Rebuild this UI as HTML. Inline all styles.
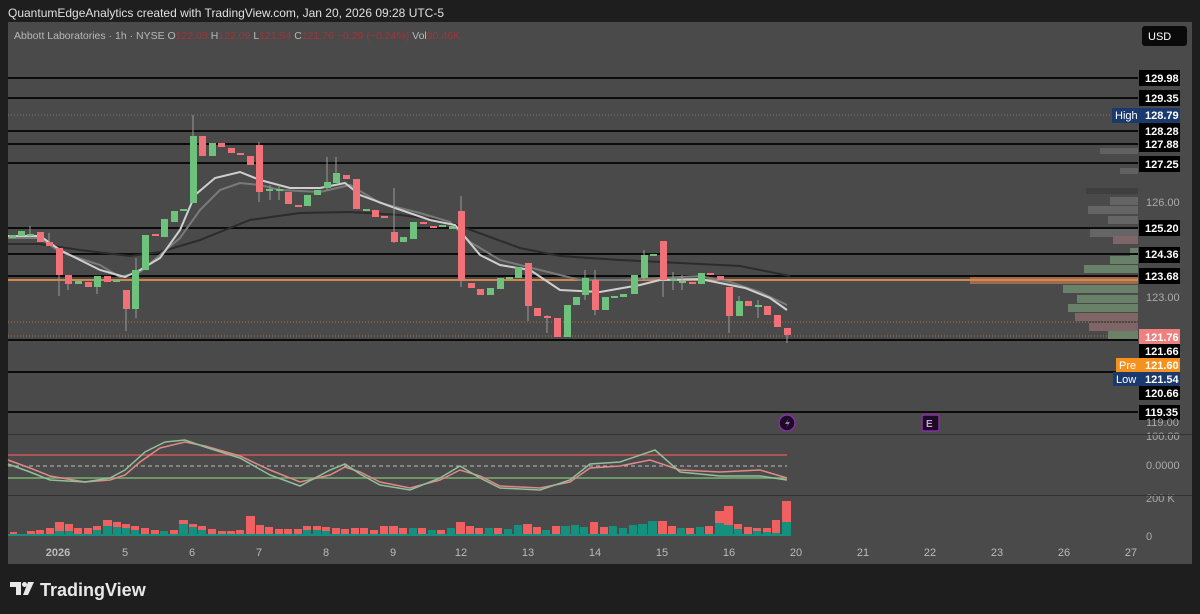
<!DOCTYPE html>
<html><head><meta charset="utf-8"><style>
body{margin:0;width:1200px;height:614px;background:#1e1e1e;overflow:hidden;font-family:"Liberation Sans",sans-serif}
svg{position:absolute;left:0;top:0}
</style></head><body>
<svg width="1200" height="614" viewBox="0 0 1200 614" font-family="Liberation Sans, sans-serif">
<rect x="8" y="22" width="1184" height="542" fill="#4a4a4a"/>
<text x="8" y="17" fill="#e0e0e0" font-size="12">QuantumEdgeAnalytics created with TradingView.com, Jan 20, 2026 09:28 UTC-5</text>
<text x="14" y="39" fill="#b8b8b8" font-size="10.5">Abbott Laboratories · 1h · NYSE  O<tspan fill="#a0343c">122.03</tspan>  H<tspan fill="#a0343c">122.09</tspan>  L<tspan fill="#a0343c">121.54</tspan>  C<tspan fill="#a0343c">121.76  −0.29 (−0.24%)</tspan>  Vol<tspan fill="#a0343c">90.46K</tspan></text>
<rect x="1142" y="26" width="45" height="20" rx="3" fill="#0a0a0a"/>
<text x="1148" y="40" fill="#fff" font-size="11">USD</text>
<!-- volume profile -->
<g opacity="0.85">
<rect x="1100" y="148" width="38" height="6" fill="#666"/><rect x="1120" y="168" width="18" height="6" fill="#666"/>
<rect x="1086" y="188" width="52" height="6" fill="#3e3e3e"/><rect x="1110" y="197" width="28" height="8" fill="#6a6a6a"/>
<rect x="1088" y="206" width="50" height="8" fill="#6a6a6a"/><rect x="1108" y="216" width="30" height="8" fill="#6a6a6a"/>
<rect x="1090" y="229" width="48" height="8" fill="#6a6a6a"/><rect x="1113" y="236" width="25" height="8" fill="#8a6a6c"/>
<rect x="1130" y="248" width="8" height="8" fill="#6f8a6f"/><rect x="1110" y="256" width="28" height="8" fill="#6f8a6f"/>
<rect x="1084" y="265" width="54" height="8" fill="#6f8a6f"/><rect x="970" y="276" width="168" height="8" fill="#b07050"/>
<rect x="1063" y="285" width="75" height="8" fill="#6f8a6f"/><rect x="1077" y="295" width="61" height="8" fill="#6f8a6f"/>
<rect x="1068" y="304" width="70" height="8" fill="#6f8a6f"/><rect x="1075" y="313" width="63" height="8" fill="#8a6a6c"/>
<rect x="1089" y="323" width="49" height="8" fill="#8a6a6c"/><rect x="1108" y="331" width="30" height="8" fill="#6f8a6f"/>
</g>
<!-- horizontal lines -->
<g stroke="#0c0c0c" stroke-width="2">
<line x1="8" x2="1138" y1="78" y2="78"/><line x1="8" x2="1138" y1="98" y2="98"/>
<line x1="8" x2="1138" y1="131" y2="131"/><line x1="8" x2="1138" y1="144" y2="144"/>
<line x1="8" x2="1138" y1="163" y2="163"/><line x1="8" x2="1138" y1="228" y2="228"/>
<line x1="8" x2="1138" y1="254" y2="254"/><line x1="8" x2="1138" y1="276" y2="276"/>
<line x1="8" x2="1138" y1="340" y2="340"/><line x1="8" x2="1138" y1="372" y2="372"/>
<line x1="8" x2="1138" y1="412" y2="412"/>
</g>
<line x1="8" x2="1138" y1="280" y2="280" stroke="#d2874f" stroke-width="2"/>
<line x1="8" x2="1138" y1="115" y2="115" stroke="#777" stroke-dasharray="1 2"/>
<line x1="8" x2="1138" y1="322" y2="322" stroke="#b07040" stroke-dasharray="1 2"/>
<line x1="8" x2="1138" y1="336" y2="336" stroke="#b07040" stroke-dasharray="1 2"/>
<!-- MAs -->
<polyline fill="none" stroke="#2c2c2c" stroke-width="2" points="8,244 40,244 80,250 130,256 160,252 200,240 250,220 300,213 350,212 400,215 440,220 460,226 520,248 560,256 620,260 680,263 740,266 790,276"/>
<polyline fill="none" stroke="#7a7a7a" stroke-width="2" points="8,238 40,238 60,252 100,265 120,277 140,272 160,255 180,238 200,210 220,190 240,183 260,185 280,190 320,192 350,185 380,203 420,213 450,222 470,242 500,260 540,270 580,280 620,280 660,278 700,276 730,282 760,292 787,305"/>
<polyline fill="none" stroke="#cfcfcf" stroke-width="2" points="8,236 40,236 60,250 100,270 125,277 140,270 160,258 180,230 195,195 215,178 240,172 260,180 290,188 320,188 345,183 360,195 395,208 430,220 455,225 480,255 500,265 530,270 560,290 600,292 640,285 660,280 700,279 720,283 745,288 770,298 787,310"/>
<!-- candles -->
<g stroke="#9a9a9a" stroke-width="1">
<line x1="59" x2="59" y1="248" y2="296"/><line x1="126" x2="126" y1="290" y2="331"/><line x1="136" x2="136" y1="258" y2="318"/>
<line x1="193" x2="193" y1="115" y2="203"/><line x1="259" x2="259" y1="142" y2="202"/><line x1="394" x2="394" y1="188" y2="243"/>
<line x1="461" x2="461" y1="196" y2="287"/><line x1="528" x2="528" y1="263" y2="321"/><line x1="547" x2="547" y1="315" y2="333"/>
<line x1="663" x2="663" y1="241" y2="297"/><line x1="729" x2="729" y1="287" y2="333"/><line x1="787" x2="787" y1="328" y2="343"/>
<line x1="30" x2="30" y1="226" y2="238"/><line x1="49" x2="49" y1="233" y2="246"/><line x1="68" x2="68" y1="275" y2="290"/>
<line x1="97" x2="97" y1="276" y2="294"/><line x1="327" x2="327" y1="157" y2="190"/><line x1="336" x2="336" y1="157" y2="183"/>
<line x1="270" x2="270" y1="185" y2="200"/><line x1="279" x2="279" y1="185" y2="200"/><line x1="585" x2="585" y1="270" y2="300"/>
<line x1="595" x2="595" y1="270" y2="315"/><line x1="644" x2="644" y1="250" y2="280"/><line x1="673" x2="673" y1="272" y2="290"/>
<line x1="682" x2="682" y1="275" y2="290"/><line x1="739" x2="739" y1="296" y2="316"/><line x1="758" x2="758" y1="300" y2="318"/>
</g>
<g fill="#6fc27c">
<rect x="9" y="235" width="7" height="3"/><rect x="18" y="231" width="7" height="5"/><rect x="27" y="234" width="7" height="2"/>
<rect x="75" y="281" width="7" height="3"/><rect x="94" y="276" width="7" height="11"/><rect x="113" y="280" width="7" height="2"/>
<rect x="132" y="270" width="7" height="39"/><rect x="142" y="235" width="7" height="35"/><rect x="161" y="219" width="7" height="18"/>
<rect x="171" y="211" width="7" height="11"/><rect x="180" y="209" width="7" height="2"/><rect x="190" y="136" width="7" height="67"/>
<rect x="209" y="143" width="7" height="13"/><rect x="266" y="189" width="7" height="2"/><rect x="276" y="189" width="7" height="2"/>
<rect x="304" y="195" width="7" height="11"/><rect x="314" y="190" width="7" height="5"/><rect x="324" y="182" width="7" height="6"/>
<rect x="333" y="173" width="7" height="10"/><rect x="363" y="209" width="7" height="2"/><rect x="400" y="237" width="7" height="5"/>
<rect x="410" y="222" width="7" height="17"/><rect x="439" y="225" width="7" height="2"/><rect x="449" y="226" width="7" height="3"/>
<rect x="487" y="288" width="7" height="7"/><rect x="497" y="278" width="7" height="11"/><rect x="506" y="277" width="7" height="2"/>
<rect x="515" y="267" width="7" height="11"/><rect x="564" y="305" width="7" height="32"/><rect x="573" y="297" width="7" height="8"/>
<rect x="582" y="278" width="7" height="17"/><rect x="602" y="297" width="7" height="13"/><rect x="611" y="296" width="7" height="2"/>
<rect x="620" y="294" width="7" height="3"/><rect x="631" y="275" width="7" height="19"/><rect x="641" y="255" width="7" height="23"/>
<rect x="650" y="254" width="7" height="2"/><rect x="670" y="279" width="7" height="2"/><rect x="679" y="281" width="7" height="2"/>
<rect x="698" y="273" width="7" height="11"/><rect x="736" y="301" width="7" height="15"/><rect x="755" y="305" width="7" height="2"/>
</g>
<g fill="#f07178">
<rect x="37" y="232" width="7" height="10"/><rect x="46" y="242" width="7" height="4"/><rect x="56" y="248" width="7" height="27"/>
<rect x="65" y="275" width="7" height="9"/><rect x="85" y="282" width="7" height="5"/><rect x="104" y="276" width="7" height="6"/>
<rect x="123" y="290" width="7" height="19"/><rect x="152" y="234" width="7" height="2"/><rect x="199" y="136" width="7" height="20"/>
<rect x="218" y="143" width="7" height="4"/><rect x="228" y="148" width="7" height="5"/><rect x="237" y="153" width="7" height="2"/>
<rect x="247" y="156" width="7" height="9"/><rect x="256" y="145" width="7" height="47"/><rect x="285" y="192" width="7" height="12"/>
<rect x="295" y="205" width="7" height="2"/><rect x="343" y="175" width="7" height="4"/><rect x="353" y="179" width="7" height="30"/>
<rect x="372" y="210" width="7" height="7"/><rect x="381" y="216" width="7" height="2"/><rect x="391" y="232" width="7" height="10"/>
<rect x="420" y="222" width="7" height="2"/><rect x="430" y="226" width="7" height="2"/><rect x="458" y="211" width="7" height="69"/>
<rect x="468" y="283" width="7" height="5"/><rect x="477" y="289" width="7" height="6"/><rect x="525" y="263" width="7" height="43"/>
<rect x="534" y="308" width="7" height="8"/><rect x="544" y="316" width="7" height="2"/><rect x="554" y="318" width="7" height="19"/>
<rect x="592" y="280" width="7" height="30"/><rect x="660" y="241" width="7" height="39"/><rect x="689" y="282" width="7" height="2"/>
<rect x="707" y="273" width="7" height="2"/><rect x="717" y="276" width="7" height="4"/><rect x="726" y="287" width="7" height="29"/>
<rect x="745" y="301" width="7" height="5"/><rect x="764" y="306" width="7" height="9"/><rect x="774" y="315" width="7" height="12"/>
<rect x="784" y="328" width="7" height="7"/>
</g>
<!-- price labels -->
<g font-size="11" font-weight="bold" fill="#fff">
<rect x="1139" y="70" width="41" height="16" fill="#000"/><text x="1145" y="82">129.98</text>
<rect x="1139" y="90" width="41" height="16" fill="#000"/><text x="1145" y="102">129.35</text>
<rect x="1112" y="108" width="27" height="15" fill="#1a3a6e"/><text x="1115" y="119" font-weight="normal">High</text>
<rect x="1139" y="108" width="41" height="15" fill="#1a3a6e"/><text x="1145" y="119">128.79</text>
<rect x="1139" y="123" width="41" height="16" fill="#000"/><text x="1145" y="135">128.28</text>
<rect x="1139" y="136" width="41" height="16" fill="#000"/><text x="1145" y="148">127.88</text>
<rect x="1139" y="156" width="41" height="16" fill="#000"/><text x="1145" y="168">127.25</text>
<rect x="1139" y="220" width="41" height="16" fill="#000"/><text x="1145" y="232">125.20</text>
<rect x="1139" y="247" width="41" height="16" fill="#000"/><text x="1145" y="258">124.36</text>
<rect x="1139" y="268" width="41" height="16" fill="#000"/><text x="1145" y="280">123.68</text>
<rect x="1139" y="329" width="41" height="15" fill="#f08080"/><text x="1145" y="341">121.76</text>
<rect x="1139" y="344" width="41" height="14" fill="#000"/><text x="1145" y="355">121.66</text>
<rect x="1116" y="358" width="23" height="14" fill="#f5921e"/><text x="1119" y="369" font-weight="normal">Pre</text>
<rect x="1139" y="358" width="41" height="14" fill="#f5921e"/><text x="1145" y="369">121.60</text>
<rect x="1113" y="372" width="26" height="14" fill="#1a3a6e"/><text x="1116" y="383" font-weight="normal">Low</text>
<rect x="1139" y="372" width="41" height="14" fill="#1a3a6e"/><text x="1145" y="383">121.54</text>
<rect x="1139" y="386" width="41" height="14" fill="#000"/><text x="1145" y="397">120.66</text>
<rect x="1139" y="405" width="41" height="15" fill="#000"/><text x="1145" y="416">119.35</text>
</g>
<g font-size="11" fill="#aaa">
<text x="1146" y="206">126.00</text><text x="1146" y="301">123.00</text>
<text x="1146" y="426">119.00</text><text x="1146" y="469">0.0000</text>
<text x="1146" y="440">100.00</text><text x="1146" y="502">200 K</text><text x="1146" y="540">0</text>
</g>
<!-- event icons -->
<circle cx="787" cy="423" r="8" fill="#1a0a22" stroke="#8a2ca8" stroke-width="1.5"/>
<path d="M789 418l-4 6h3l-2 4 4-6h-3z" fill="#b46ad0"/>
<rect x="922" y="415" width="17" height="16" rx="2" fill="#1a0a22" stroke="#8a2ca8" stroke-width="1.5"/>
<text x="926" y="427" fill="#d0a0e0" font-size="10" font-weight="bold">E</text>
<!-- pane separators -->
<line x1="8" x2="1192" y1="434.5" y2="434.5" stroke="#333"/>
<line x1="8" x2="1192" y1="495.5" y2="495.5" stroke="#333"/>
<!-- oscillator -->
<line x1="8" x2="787" y1="455" y2="455" stroke="#d05858" stroke-width="1.5"/>
<line x1="8" x2="787" y1="466" y2="466" stroke="#bbb" stroke-dasharray="4 3"/>
<line x1="8" x2="787" y1="478" y2="478" stroke="#7ab070" stroke-width="1.5"/>
<polyline fill="none" stroke="#e08888" stroke-width="1.5" points="8,460 30,468 50,476 85,482 110,480 125,475 140,462 160,448 185,442 205,446 240,456 270,470 300,482 330,475 345,467 360,472 380,482 410,488 440,480 460,470 480,476 500,486 540,488 570,482 590,468 620,466 650,460 680,470 720,472 760,470 787,478"/>
<polyline fill="none" stroke="#8fc09a" stroke-width="1.5" points="8,464 30,472 50,480 85,482 110,478 125,470 145,452 165,442 185,440 205,447 240,458 270,475 300,486 330,470 345,464 360,474 380,485 410,490 440,478 460,466 480,478 500,488 540,490 570,480 590,464 620,462 655,450 680,472 720,476 760,476 787,480"/>
<!-- volume -->
<g fill="#f06060">
<rect x="10" y="532" width="7" height="4"/><rect x="27" y="531" width="8" height="5"/><rect x="36" y="530" width="8" height="6"/><rect x="46" y="528" width="8" height="8"/><rect x="55" y="522" width="9" height="14"/><rect x="65" y="524" width="8" height="12"/><rect x="74" y="528" width="8" height="8"/><rect x="84" y="528" width="8" height="8"/><rect x="93" y="526" width="8" height="10"/><rect x="103" y="520" width="9" height="16"/><rect x="113" y="522" width="8" height="14"/><rect x="122" y="524" width="8" height="12"/><rect x="131" y="526" width="8" height="10"/><rect x="141" y="528" width="8" height="8"/><rect x="151" y="530" width="8" height="6"/><rect x="170" y="530" width="8" height="6"/><rect x="179" y="520" width="9" height="16"/><rect x="189" y="524" width="8" height="12"/><rect x="198" y="526" width="8" height="10"/><rect x="208" y="529" width="8" height="7"/><rect x="218" y="531" width="8" height="5"/><rect x="227" y="531" width="8" height="5"/><rect x="236" y="530" width="8" height="6"/><rect x="246" y="516" width="9" height="20"/><rect x="256" y="525" width="8" height="11"/><rect x="265" y="527" width="8" height="9"/><rect x="275" y="529" width="8" height="7"/><rect x="284" y="529" width="8" height="7"/><rect x="294" y="529" width="8" height="7"/><rect x="303" y="526" width="8" height="10"/><rect x="313" y="526" width="8" height="10"/><rect x="322" y="527" width="8" height="9"/><rect x="332" y="528" width="8" height="8"/><rect x="341" y="529" width="8" height="7"/><rect x="351" y="528" width="8" height="8"/><rect x="360" y="528" width="8" height="8"/><rect x="370" y="530" width="8" height="6"/><rect x="380" y="526" width="8" height="10"/><rect x="389" y="526" width="9" height="10"/><rect x="399" y="528" width="8" height="8"/><rect x="418" y="528" width="8" height="8"/><rect x="437" y="530" width="8" height="6"/><rect x="456" y="522" width="9" height="14"/><rect x="466" y="526" width="8" height="10"/><rect x="475" y="528" width="8" height="8"/><rect x="494" y="528" width="8" height="8"/><rect x="523" y="524" width="9" height="12"/><rect x="533" y="527" width="8" height="9"/><rect x="552" y="526" width="8" height="10"/><rect x="590" y="522" width="8" height="14"/><rect x="600" y="527" width="8" height="9"/><rect x="658" y="521" width="9" height="15"/><rect x="668" y="526" width="8" height="10"/><rect x="686" y="528" width="8" height="8"/><rect x="705" y="526" width="8" height="10"/><rect x="715" y="511" width="9" height="25"/><rect x="724" y="506" width="9" height="30"/><rect x="734" y="524" width="8" height="12"/><rect x="744" y="527" width="8" height="9"/><rect x="753" y="528" width="8" height="8"/><rect x="763" y="528" width="8" height="8"/><rect x="772" y="520" width="8" height="16"/><rect x="782" y="501" width="9" height="35"/>
</g>
<g fill="#15907e">
<rect x="8" y="534" width="780" height="2"/>
<rect x="55" y="531" width="9" height="5"/><rect x="65" y="531" width="8" height="5"/><rect x="93" y="530" width="8" height="6"/><rect x="103" y="526" width="9" height="10"/><rect x="113" y="527" width="8" height="9"/><rect x="122" y="528" width="8" height="8"/><rect x="131" y="530" width="8" height="6"/><rect x="160" y="531" width="8" height="5"/><rect x="179" y="524" width="9" height="12"/><rect x="189" y="527" width="8" height="9"/><rect x="198" y="530" width="8" height="6"/><rect x="303" y="530" width="8" height="6"/><rect x="313" y="530" width="8" height="6"/><rect x="322" y="531" width="8" height="5"/><rect x="409" y="528" width="8" height="8"/><rect x="428" y="530" width="8" height="6"/><rect x="447" y="528" width="8" height="8"/><rect x="485" y="528" width="8" height="8"/><rect x="504" y="529" width="8" height="7"/><rect x="514" y="525" width="8" height="11"/><rect x="542" y="530" width="8" height="6"/><rect x="561" y="526" width="9" height="10"/><rect x="571" y="525" width="8" height="11"/><rect x="580" y="527" width="8" height="9"/><rect x="609" y="526" width="8" height="10"/><rect x="619" y="528" width="8" height="8"/><rect x="629" y="525" width="8" height="11"/><rect x="638" y="524" width="9" height="12"/><rect x="648" y="521" width="9" height="15"/><rect x="677" y="528" width="8" height="8"/><rect x="696" y="527" width="8" height="9"/><rect x="715" y="523" width="9" height="13"/><rect x="724" y="525" width="9" height="11"/><rect x="734" y="529" width="8" height="7"/><rect x="753" y="531" width="8" height="5"/><rect x="763" y="532" width="8" height="4"/><rect x="772" y="533" width="8" height="3"/><rect x="782" y="522" width="9" height="14"/>
</g>
<!-- date axis -->
<g font-size="11" fill="#bbb" text-anchor="middle">
<text x="58" y="556" font-weight="bold">2026</text><text x="125" y="556">5</text><text x="192" y="556">6</text><text x="259" y="556">7</text><text x="326" y="556">8</text><text x="393" y="556">9</text><text x="461" y="556">12</text><text x="528" y="556">13</text><text x="595" y="556">14</text><text x="662" y="556">15</text><text x="729" y="556">16</text><text x="796" y="556">20</text><text x="863" y="556">21</text><text x="930" y="556">22</text><text x="997" y="556">23</text><text x="1064" y="556">26</text><text x="1131" y="556">27</text>
</g>
<!-- logo -->
<g fill="#e8e8e8">
<path d="M10 582h11v13h-5v-8h-6z"/><circle cx="24.5" cy="584.5" r="2.5"/><path d="M28 582h6l-6 13h-5z"/>
</g>
<text x="40" y="596" fill="#e8e8e8" font-size="18" font-weight="bold">TradingView</text>
</svg>
</body></html>
